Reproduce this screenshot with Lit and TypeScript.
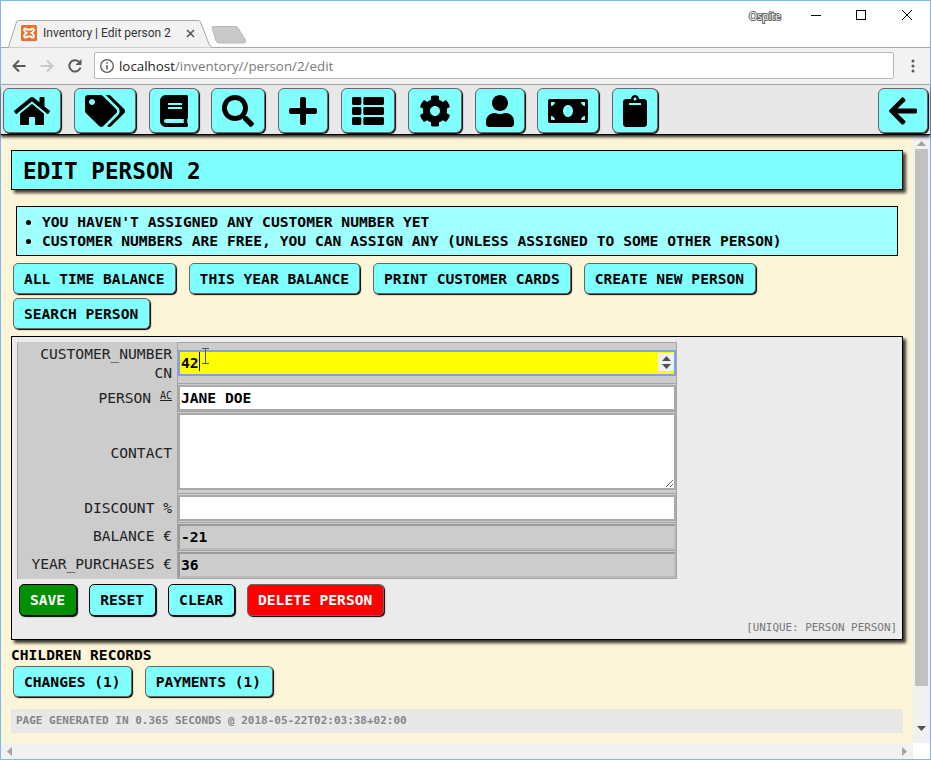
import { LitElement, html, css } from "lit";
import { customElement } from "lit/decorators.js";

const ICONS: Record<string, [number, string]> = {
  home: [576, "M280.37 148.26L96 300.11V464a16 16 0 0 0 16 16l112.06-.29a16 16 0 0 0 15.92-16V368a16 16 0 0 1 16-16h64a16 16 0 0 1 16 16v95.64a16 16 0 0 0 16 16.05L464 480a16 16 0 0 0 16-16V300L295.67 148.26a12.19 12.19 0 0 0-15.3 0zM571.6 251.47L488 182.56V44.05a12 12 0 0 0-12-12h-56a12 12 0 0 0-12 12v72.61L318.47 43a48 48 0 0 0-61 0L4.34 251.47a12 12 0 0 0-1.6 16.9l25.5 31A12 12 0 0 0 45.15 301l235.22-193.74a12.19 12.19 0 0 1 15.3 0L530.9 301a12 12 0 0 0 16.9-1.6l25.5-31a12 12 0 0 0-1.7-16.93z"],
  tags: [640, "M497.941 225.941L286.059 14.059A48 48 0 0 0 252.118 0H48C21.49 0 0 21.49 0 48v204.118a48 48 0 0 0 14.059 33.941l211.882 211.882c18.744 18.745 49.136 18.746 67.882 0l204.118-204.118c18.745-18.745 18.745-49.137 0-67.882zM112 160c-26.51 0-48-21.49-48-48s21.49-48 48-48 48 21.49 48 48-21.49 48-48 48zm513.941 133.823L421.823 497.941c-18.745 18.745-49.137 18.745-67.882 0l-.36-.36L527.64 323.522c16.999-16.999 26.36-39.6 26.36-63.64s-9.362-46.641-26.36-63.64L331.397 0h48.721a48 48 0 0 1 33.941 14.059l211.882 211.882c18.745 18.745 18.745 49.137 0 67.882z"],
  book: [448, "M448 360V24c0-13.3-10.7-24-24-24H96C43 0 0 43 0 96v320c0 53 43 96 96 96h328c13.3 0 24-10.7 24-24v-16c0-7.5-3.5-14.3-8.9-18.7-4.2-15.4-4.2-59.3 0-74.7 5.4-4.3 8.9-11.1 8.9-18.6zM128 134c0-3.3 2.7-6 6-6h212c3.3 0 6 2.7 6 6v20c0 3.3-2.7 6-6 6H134c-3.3 0-6-2.7-6-6v-20zm0 64c0-3.3 2.7-6 6-6h212c3.3 0 6 2.7 6 6v20c0 3.3-2.7 6-6 6H134c-3.3 0-6-2.7-6-6v-20zm253.4 250H96c-17.7 0-32-14.3-32-32 0-17.6 14.4-32 32-32h285.4c-1.9 17.1-1.9 46.9 0 64z"],
  search: [512, "M505 442.7L405.3 343c-4.5-4.5-10.6-7-17-7H372c27.6-35.3 44-79.7 44-128C416 93.1 322.9 0 208 0S0 93.1 0 208s93.1 208 208 208c48.3 0 92.7-16.4 128-44v16.3c0 6.4 2.5 12.5 7 17l99.7 99.7c9.4 9.4 24.6 9.4 33.9 0l28.3-28.3c9.4-9.4 9.4-24.6.1-34zM208 336c-70.7 0-128-57.2-128-128 0-70.7 57.2-128 128-128 70.7 0 128 57.2 128 128 0 70.7-57.2 128-128 128z"],
  plus: [448, "M416 208H272V64c0-17.67-14.33-32-32-32h-32c-17.67 0-32 14.33-32 32v144H32c-17.67 0-32 14.33-32 32v32c0 17.67 14.33 32 32 32h144v144c0 17.67 14.33 32 32 32h32c17.67 0 32-14.33 32-32V304h144c17.67 0 32-14.33 32-32v-32c0-17.67-14.33-32-32-32z"],
  list: [512, "M149.333 216v80c0 13.255-10.745 24-24 24H24c-13.255 0-24-10.745-24-24v-80c0-13.255 10.745-24 24-24h101.333c13.255 0 24 10.745 24 24zM0 376v80c0 13.255 10.745 24 24 24h101.333c13.255 0 24-10.745 24-24v-80c0-13.255-10.745-24-24-24H24c-13.255 0-24 10.745-24 24zM125.333 32H24C10.745 32 0 42.745 0 56v80c0 13.255 10.745 24 24 24h101.333c13.255 0 24-10.745 24-24V56c0-13.255-10.745-24-24-24zm80 448H488c13.255 0 24-10.745 24-24v-80c0-13.255-10.745-24-24-24H205.333c-13.255 0-24 10.745-24 24v80c0 13.255 10.745 24 24 24zm-24-424v80c0 13.255 10.745 24 24 24H488c13.255 0 24-10.745 24-24V56c0-13.255-10.745-24-24-24H205.333c-13.255 0-24 10.745-24 24zm24 264H488c13.255 0 24-10.745 24-24v-80c0-13.255-10.745-24-24-24H205.333c-13.255 0-24 10.745-24 24v80c0 13.255 10.745 24 24 24z"],
  cog: [512, "M487.4 315.7l-42.6-24.6c4.3-23.2 4.3-47 0-70.2l42.6-24.6c4.9-2.8 7.1-8.6 5.5-14-11.1-35.6-30-67.8-54.7-94.6-3.8-4.1-10-5.1-14.8-2.3L380.8 110c-17.9-15.4-38.5-27.3-60.8-35.1V25.8c0-5.6-3.9-10.5-9.4-11.7-36.7-8.2-74.3-7.8-109.2 0-5.5 1.2-9.4 6.1-9.4 11.7V75c-22.2 7.9-42.8 19.8-60.8 35.1L88.7 85.5c-4.9-2.8-11-1.9-14.8 2.3-24.7 26.7-43.6 58.9-54.7 94.6-1.7 5.4.6 11.2 5.5 14L67.3 221c-4.3 23.2-4.3 47 0 70.2l-42.6 24.6c-4.9 2.8-7.1 8.6-5.5 14 11.1 35.6 30 67.8 54.7 94.6 3.8 4.1 10 5.1 14.8 2.3l42.6-24.6c17.9 15.4 38.5 27.3 60.8 35.1v49.2c0 5.6 3.9 10.5 9.4 11.7 36.7 8.2 74.3 7.8 109.2 0 5.5-1.2 9.4-6.1 9.4-11.7v-49.2c22.2-7.9 42.8-19.8 60.8-35.1l42.6 24.6c4.9 2.8 11 1.9 14.8-2.3 24.7-26.7 43.6-58.9 54.7-94.6 1.5-5.5-.7-11.3-5.6-14.1zM256 336c-44.1 0-80-35.9-80-80s35.9-80 80-80 80 35.9 80 80-35.9 80-80 80z"],
  user: [448, "M224 256c70.7 0 128-57.3 128-128S294.7 0 224 0 96 57.3 96 128s57.3 128 128 128zm89.6 32h-16.7c-22.2 10.2-46.9 16-72.9 16s-50.6-5.8-72.9-16h-16.7C60.2 288 0 348.2 0 422.4V464c0 26.5 21.5 48 48 48h352c26.5 0 48-21.5 48-48v-41.6c0-74.2-60.2-134.4-134.4-134.4z"],
  money: [640, "M608 64H32C14.33 64 0 78.33 0 96v320c0 17.67 14.33 32 32 32h576c17.67 0 32-14.33 32-32V96c0-17.67-14.33-32-32-32zM48 400v-64c35.35 0 64 28.65 64 64H48zm0-224v-64h64c0 35.35-28.65 64-64 64zm272 176c-44.19 0-80-42.99-80-96 0-53.02 35.82-96 80-96s80 42.98 80 96c0 53.03-35.83 96-80 96zm272 48h-64c0-35.35 28.65-64 64-64v64zm0-224c-35.35 0-64-28.65-64-64h64v64z"],
  clip: [384, "M384 112v352c0 26.51-21.49 48-48 48H48c-26.51 0-48-21.49-48-48V112c0-26.51 21.49-48 48-48h80c0-35.29 28.71-64 64-64s64 28.71 64 64h80c26.51 0 48 21.49 48 48zM192 40c-13.255 0-24 10.745-24 24s10.745 24 24 24 24-10.745 24-24-10.745-24-24-24m96 114v-20a6 6 0 0 0-6-6H102a6 6 0 0 0-6 6v20a6 6 0 0 0 6 6h180a6 6 0 0 0 6-6z"],
  back: [448, "M257.5 445.1l-22.2 22.2c-9.4 9.4-24.6 9.4-33.9 0L7 273c-9.4-9.4-9.4-24.6 0-33.9L201.4 44.7c9.4-9.4 24.6-9.4 33.9 0l22.2 22.2c9.5 9.5 9.3 25-.4 34.3L136.6 216H424c13.3 0 24 10.7 24 24v32c0 13.3-10.7 24-24 24H136.6l120.5 114.8c9.8 9.3 10 24.8.4 34.3z"],
};

const icon = (name: string) => {
  const [w, d] = ICONS[name];
  return html`<svg class="fa" viewBox="0 0 ${w} 512" style="width:${(w / 512) * 32}px"><path d=${d}></path></svg>`;
};

@customElement("app-root")
export class AppRoot extends LitElement {
  static styles = css`
    :host { display: block; width: 931px; height: 760px; overflow: hidden; }
    * { box-sizing: border-box; }
    .window {
      width: 931px; height: 760px; border: 1px solid #7fb8f0;
      display: flex; flex-direction: column; background: #fff;
      font-family: "DejaVu Sans Mono", monospace; font-size: 14.6px; color: #000;
    }
    /* browser chrome */
    .strip { height: 47px; flex: none; display: flex; align-items: flex-end; border-bottom: 1px solid #a8a8a8; padding-left: 6px; }
    .tab { position: relative; width: 207px; height: 28px; margin-bottom: -1px; display: flex; align-items: center; padding: 0 0 2px 14px; font: 12px Roboto, sans-serif; color: #333; }
    .tab-bg { position: absolute; left: 0; top: 0; width: 207px; height: 28px; }
    .favicon, .tab-title, .tab-x { position: relative; }
    .favicon { width: 16px; height: 16px; margin-right: 6px; flex: none; }
    .tab-title { width: 143px; white-space: nowrap; flex: none; }
    .tab-x { width: 9px; height: 9px; flex: none; }
    .newtab { width: 36px; height: 19px; margin: 0 0 2px -3px; flex: none; }
    .winctl { margin-left: auto; align-self: flex-start; display: flex; align-items: flex-start; }
    .user-name { font: 400 10.5px "Open Sans", sans-serif; color: #fff; margin: 8px 30px 0 0; -webkit-text-stroke: 2px #666; paint-order: stroke fill; }
    .winbtn { width: 10px; height: 10px; margin: 9px 18px 0 0; }
    .winbtn.max { margin-right: 36px; }
    .winbtn.min { margin-right: 35px; }
    .toolbar { height: 37px; flex: none; background: #f2f2f2; border-bottom: 1px solid #aaa; display: flex; align-items: center; padding: 0 0 1px 10px; }
    .nav-ico { width: 16px; height: 16px; margin-right: 12px; flex: none; }
    .url { width: 800px; height: 27px; margin-left: -1px; background: #fff; border: 1px solid #b8b8b8; border-radius: 2px; display: flex; align-items: center; padding-left: 4px; font: 13.35px "Open Sans", sans-serif; color: #7a7a7a; }
    .url svg { width: 16px; height: 16px; margin-right: 4px; }
    .url b { font-weight: 400; color: #222; }
    .dots { width: 4px; height: 14px; margin-left: 17px; }
    /* app nav */
    .nav { height: 50px; flex: none; background: #e8e8e8; border-bottom: 1px solid #000; box-shadow: 0 2px 3px #222; display: flex; align-items: flex-start; gap: 12.8px; padding: 3px 2px 0 2px; position: relative; z-index: 1; }
    .nav .spacer { flex: 1; }
    .nav a { display: flex; align-items: center; height: 45px; padding: 0 10px; background: #80ffff; border: 1px solid #666; border-radius: 6px; box-shadow: 1px 1px 1px #000; }
    .fa { height: 32px; display: block; fill: #000; }
    .nav a.last { margin-left: -12.8px; }
    /* page */
    .viewport { flex: 1; min-height: 0; display: flex; }
    .main { flex: 1; min-width: 0; background: #fdf5d8; padding: 15px 10px 0; overflow: hidden; }
    .vbar { width: 17px; flex: none; background: #f1f1f1; display: flex; flex-direction: column; align-items: center; padding: 6px 1px 5px 0; }
    .vbar .thumb { width: 13px; height: 537px; background: #c1c1c1; margin: 3px 0 40px; flex: none; }
    .arrow-svg { width: 9px; height: 5px; flex: none; display: block; }
    .hbar { height: 16px; flex: none; display: flex; background: #f1f1f1; align-items: center; }
    .hbar .track { flex: 1; display: flex; justify-content: space-between; align-items: center; padding: 0 6px 0 6px; }
    .hbar .corner { width: 17px; height: 16px; background: #fff; }
    .hbar svg { width: 5px; height: 9px; display: block; }
    h1 { margin: 0; height: 40px; line-height: 40px; padding-left: 11px; font-size: 22.7px; font-weight: 700; background: #80ffff; border: 1px solid #000; box-shadow: 3px 3px 3px rgba(0,0,0,.75); }
    .info { margin: 16px 5px 0; height: 50px; border: 1px solid #000; background: #a0ffff; padding: 5px 0 0 25px; font-weight: 700; font-size: 14.64px; }
    .info ul { margin: 0; padding: 0; }
    .info li { line-height: 19px; white-space: nowrap; }
    .btns { display: flex; flex-wrap: wrap; gap: 4px 12.5px; margin: 7px 0 0 2px; }
    .btn { height: 31px; padding: 0 10.5px 0 10px; display: flex; align-items: center; background: #80ffff; border: 1px solid #666; border-radius: 5px; box-shadow: 1px 1px 1px #000; font-weight: 700; white-space: nowrap; color: #000; }
    .btn.dark { border-color: #000; }
    .btn.save { background: #009000; color: #fff; border-color: #000; }
    .btn.del { background: #f00; color: #fff; }
    .form { margin-top: 7px; border: 1px solid #000; height: 304px; padding: 5px; background: #ebebeb; box-shadow: 3px 3px 3px rgba(0,0,0,.8); }
    table { border-collapse: collapse; width: 660px; table-layout: fixed; background: #ccc; }
    td { border: 1px solid #a4a4a4; padding: 0; vertical-align: middle; }
    td.label { width: 160px; text-align: right; padding: 0 5px 2px 0; color: #222; line-height: 19px; border-bottom: 0; border-top: 0; }
    tr.r1 td.label { padding-bottom: 0; }
    tr.r1 td { height: 41px; } tr.r2 td { height: 28px; } tr.r3 td { height: 82px; }
    tr.r3 td.label { padding-bottom: 0; }
    tr.r3 td.field { vertical-align: top; padding-top: 1px; }
    tr.r4 td { height: 29px; } tr.r5 td, tr.r6 td { height: 28px; }
    abbr { font-size: 10px; vertical-align: 4px; text-decoration: underline; }
    .inp, textarea { display: block; width: 100%; height: 26px; border: 2px solid #a9a9a9; background: #fff; padding: 0 1px 1px; margin: 0; font: 700 14.6px "DejaVu Sans Mono", monospace; color: #000; outline: none; border-radius: 0; }
    textarea { height: 77px; resize: both; }
    .inp.ro { background: #ccc; border-color: #999 #bbb #bbb #999; }
    .focused { position: relative; height: 26px; border: 2px solid #7ba4e4; background: #ff0; display: flex; align-items: center; padding: 0 1px 1px; font-weight: 700; }
    .caret { width: 1px; height: 19px; background: #000; align-self: flex-start; }
    .spin { position: absolute; right: 0; top: 1px; width: 16px; height: 18px; background: #f0f0f0; display: flex; flex-direction: column; align-items: center; justify-content: center; gap: 3px; }
    .spin svg { width: 9px; height: 5px; display: block; }
    .ibeam { position: absolute; left: 21px; top: -4px; width: 9px; height: 16px; }
    .actions { display: flex; gap: 12.5px; margin: 5px 0 0 2px; height: 32px; }
    .actions .btn { height: 32px; padding-bottom: 1px; }
    .unique { margin-top: 5px; height: 13px; line-height: 13px; text-align: right; font-size: 10.9px; color: #777; }
    h2 { margin: 5px 0 0; font-size: 14.6px; line-height: 19px; font-weight: 700; }
    .child { margin-top: 2px; }
    .foot { margin-top: 12px; height: 24px; line-height: 24px; background: #e8e8e8; color: #858585; font-size: 11px; font-weight: 700; padding-left: 5px; }
  `;

  render() {
    const navs = ["home", "tags", "book", "search", "plus", "list", "cog", "user", "money", "clip"];
    return html`<div class="window">
      <div class="strip">
        <div class="tab">
          <svg class="tab-bg" viewBox="0 0 207 28"><path d="M0 28 L1.5 27 L9.5 2 Q10 0.5 12 0.5 L191 0.5 Q193 0.5 193.5 2 L202 24 Q203 27 206 27.5 L207 28 Z" fill="#f2f2f2" stroke="#a8a8a8"></path></svg>
          <svg class="favicon" viewBox="0 0 16 16"><rect width="16" height="16" rx="1.5" fill="#ea7125"></rect><path d="M6 4.500Q5 3 3.800 3.600 2.600 4.300 3.500 6 4.500 7.500 5.500 8 4.500 8.500 3.500 10 2.600 11.700 3.800 12.400 5 13 6 11.500H10Q11 13 12.200 12.400 13.400 11.700 12.500 10 11.500 8.500 10.500 8 11.500 7.500 12.500 6 13.400 4.300 12.200 3.600 11 3 10 4.500Z" fill="none" stroke="#fff" stroke-width="1.800"></path></svg>
          <span class="tab-title">Inventory | Edit person 2</span>
          <svg class="tab-x" viewBox="0 0 9 9"><path d="M1 1l7 7M8 1l-7 7" stroke="#555" stroke-width="1.600"></path></svg>
        </div>
        <svg class="newtab" viewBox="0 0 36 19"><path d="M1 1.500 Q1 0.500 2 0.500 L25 0.500 Q26 0.500 27 2 L34.500 14 Q35 17 33 17 L8 17 Q6 17 5 15 Z" fill="#c9c9c9" stroke="#b8b8b8"></path></svg>
        <div class="winctl">
          <span class="user-name">Ospite</span>
          <svg class="winbtn min" viewBox="0 0 10 10"><path d="M0 5.500h10" stroke="#000"></path></svg>
          <svg class="winbtn max" viewBox="0 0 10 10"><rect x=".5" y=".5" width="9" height="9" fill="none" stroke="#000"></rect></svg>
          <svg class="winbtn" viewBox="0 0 10 10"><path d="M0 0l10 10M10 0L0 10" stroke="#000"></path></svg>
        </div>
      </div>
      <div class="toolbar">
        <svg class="nav-ico" viewBox="0 0 16 16"><path d="M14.500 8H3M8 2.500L2.500 8 8 13.500" fill="none" stroke="#5a5a5a" stroke-width="2"></path></svg>
        <svg class="nav-ico" viewBox="0 0 16 16"><path d="M1.500 8H13M8 2.500L13.500 8 8 13.500" fill="none" stroke="#c8c8c8" stroke-width="2"></path></svg>
        <svg class="nav-ico" viewBox="0 0 16 16"><path d="M13.500 9.500A5.700 5.700 0 1 1 12 3.800" fill="none" stroke="#5a5a5a" stroke-width="2"></path><path d="M14.500 1v6h-6z" fill="#5a5a5a"></path></svg>
        <div class="url">
          <svg viewBox="0 0 16 16"><circle cx="8" cy="8" r="6.300" fill="none" stroke="#5a5a5a" stroke-width="1.300"></circle><path d="M8 7v4.500M8 4.300v1.500" stroke="#5a5a5a" stroke-width="1.500"></path></svg>
          <span><b>localhost</b>/inventory//person/2/edit</span>
        </div>
        <svg class="dots" viewBox="0 0 4 14"><g fill="#5a5a5a"><circle cx="2" cy="2" r="1.500"></circle><circle cx="2" cy="7" r="1.500"></circle><circle cx="2" cy="12" r="1.500"></circle></g></svg>
      </div>
      <div class="nav">
        ${navs.map((n) => html`<a>${icon(n)}</a>`)}
        <span class="spacer"></span>
        <a class="last">${icon("back")}</a>
      </div>
      <div class="viewport">
        <div class="main">
          <h1>EDIT PERSON 2</h1>
          <div class="info"><ul>
            <li>YOU HAVEN'T ASSIGNED ANY CUSTOMER NUMBER YET</li>
            <li>CUSTOMER NUMBERS ARE FREE, YOU CAN ASSIGN ANY (UNLESS ASSIGNED TO SOME OTHER PERSON)</li>
          </ul></div>
          <div class="btns">
            <a class="btn">ALL TIME BALANCE</a>
            <a class="btn">THIS YEAR BALANCE</a>
            <a class="btn">PRINT CUSTOMER CARDS</a>
            <a class="btn">CREATE NEW PERSON</a>
            <a class="btn">SEARCH PERSON</a>
          </div>
          <div class="form">
            <table>
              <tr class="r1"><td class="label">CUSTOMER_NUMBER CN</td><td class="field">
                <div class="focused">42<span class="caret"></span>
                  <span class="spin">
                    <svg viewBox="0 0 9 5"><path d="M4.500 0L9 5H0z" fill="#505050"></path></svg>
                    <svg viewBox="0 0 9 5"><path d="M4.500 5L0 0h9z" fill="#505050"></path></svg>
                  </span>
                  <svg class="ibeam" viewBox="0 0 9 16"><path d="M1 .5h7M4.500 1v7" stroke="#555" fill="none"></path><path d="M4.500 8v7M1 15.500h7" stroke="#2a4fd0" fill="none"></path></svg>
                </div>
              </td></tr>
              <tr class="r2"><td class="label">PERSON <abbr>AC</abbr></td><td class="field"><input class="inp" .value=${"JANE DOE"} /></td></tr>
              <tr class="r3"><td class="label">CONTACT</td><td class="field"><textarea></textarea></td></tr>
              <tr class="r4"><td class="label">DISCOUNT %</td><td class="field"><input class="inp" /></td></tr>
              <tr class="r5"><td class="label">BALANCE €</td><td class="field"><input class="inp ro" readonly .value=${"-21"} /></td></tr>
              <tr class="r6"><td class="label">YEAR_PURCHASES €</td><td class="field"><input class="inp ro" readonly .value=${"36"} /></td></tr>
            </table>
            <div class="actions">
              <a class="btn save">SAVE</a>
              <a class="btn dark">RESET</a>
              <a class="btn dark">CLEAR</a>
              <a class="btn del">DELETE PERSON</a>
            </div>
            <div class="unique">[UNIQUE: PERSON PERSON]</div>
          </div>
          <h2>CHILDREN RECORDS</h2>
          <div class="btns child">
            <a class="btn">CHANGES (1)</a>
            <a class="btn">PAYMENTS (1)</a>
          </div>
          <div class="foot">PAGE GENERATED IN 0.365 SECONDS @ 2018-05-22T02:03:38+02:00</div>
        </div>
        <div class="vbar">
          <svg class="arrow-svg" viewBox="0 0 9 5"><path d="M4.500 0L9 5H0z" fill="#a3a3a3"></path></svg>
          <div class="thumb"></div>
          <svg class="arrow-svg" viewBox="0 0 9 5"><path d="M4.500 5L0 0h9z" fill="#505050"></path></svg>
        </div>
      </div>
      <div class="hbar">
        <div class="track">
          <svg viewBox="0 0 5 9"><path d="M0 4.500L5 0v9z" fill="#a3a3a3"></path></svg>
          <svg viewBox="0 0 5 9"><path d="M5 4.500L0 0v9z" fill="#a3a3a3"></path></svg>
        </div>
        <div class="corner"></div>
      </div>
    </div>`;
  }
}
